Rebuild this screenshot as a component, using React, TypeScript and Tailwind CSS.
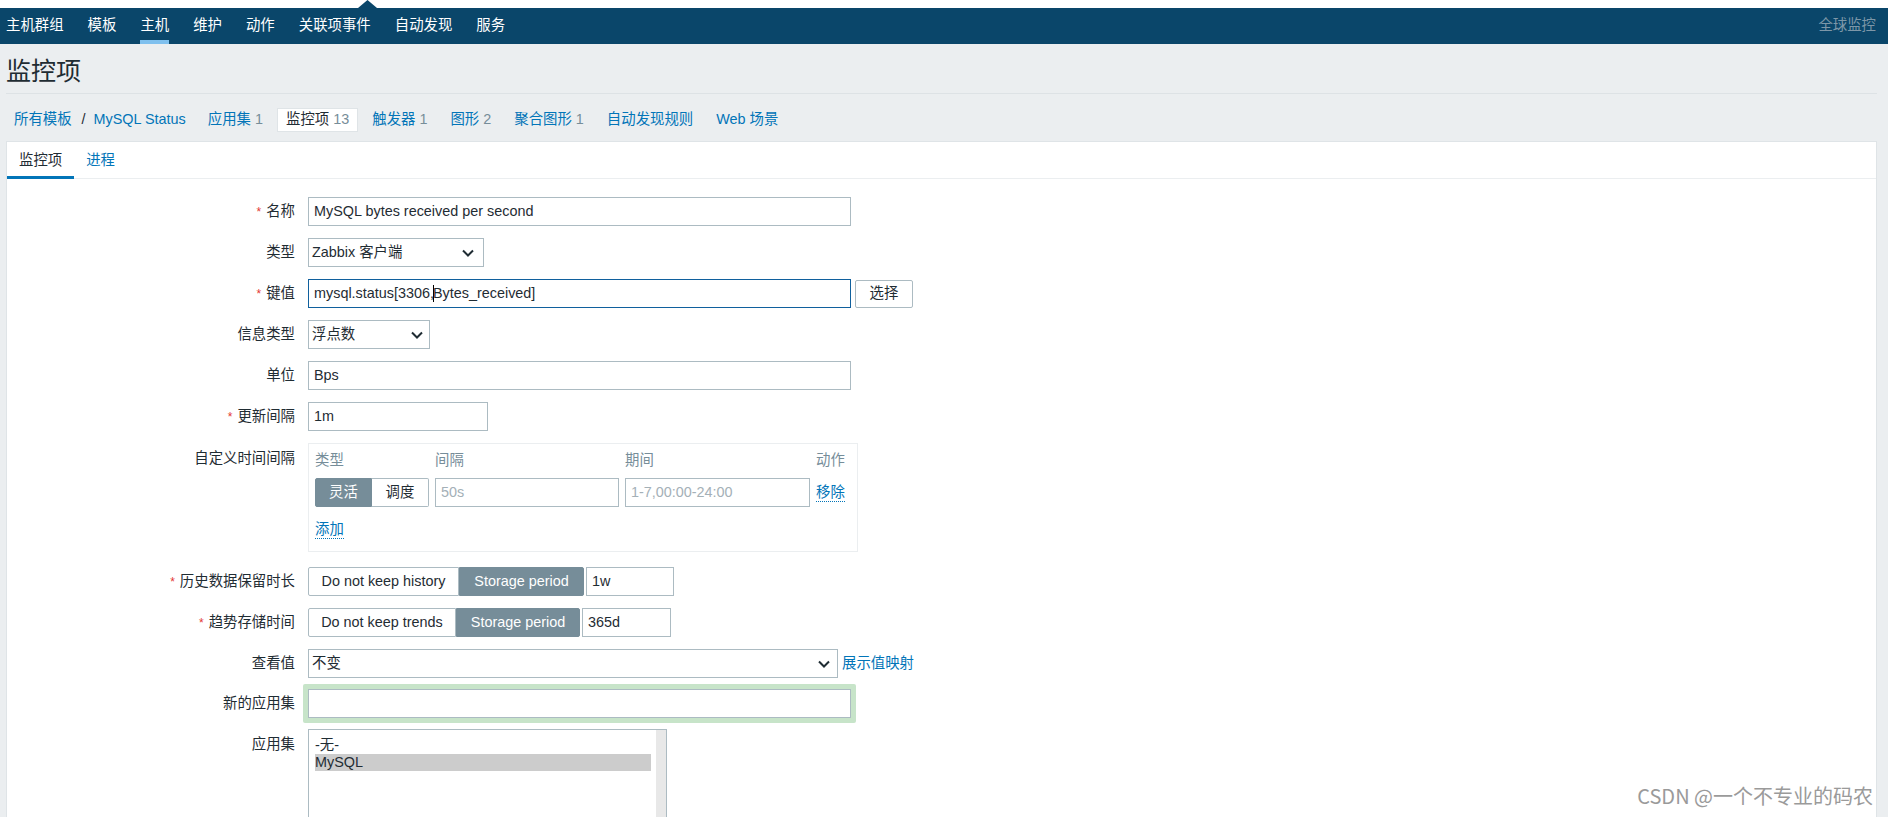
import React from 'react';

const navItems = ['主机群组', '模板', '主机', '维护', '动作', '关联项事件', '自动发现', '服务'];

const Chevron = () => (
  <svg width="12" height="8" viewBox="0 0 12 8" fill="none" className="shrink-0">
    <path d="M1 1.5 6 6.5 11 1.5" stroke="#1f2c33" strokeWidth="2" />
  </svg>
);

const Req = () => <span className="mr-[5px] text-[12px] text-[#e33734]">*</span>;

const Row = ({
  label,
  required,
  top,
  className = 'py-[6px]',
  children,
}: {
  label: string;
  required?: boolean;
  top?: boolean;
  className?: string;
  children: React.ReactNode;
}) => (
  <div className={`flex ${top ? 'items-start' : 'items-center'} ${className}`}>
    <div className={`w-[288px] shrink-0 text-right ${top ? 'pt-[5px]' : ''}`}>
      {required && <Req />}
      {label}
    </div>
    <div className="ml-[13px] flex items-center">{children}</div>
  </div>
);

const Crumb = ({ text, num, active }: { text: string; num?: string; active?: boolean }) => (
  <span
    className={`flex h-[24px] items-center border px-[8px] ${
      active ? 'border-[#dfe4e7] bg-white text-[#1f2c33]' : 'border-transparent text-[#0275b8]'
    }`}
  >
    {text}
    {num && <span className="ml-[4px] text-[#768d99]">{num}</span>}
  </span>
);

export default function App() {
  return (
    <div className="relative h-[817px] overflow-hidden bg-[#ebeef0] text-[14.4px] text-[#1f2c33] font-['Liberation_Sans','Noto_Sans_CJK_SC',sans-serif]">
      {/* top strip */}
      <div className="relative h-[8px] bg-white">
        <svg className="absolute left-[358px] top-0" width="19" height="8" viewBox="0 0 19 8">
          <path d="M9.5 0 19 8H0Z" fill="#0a466a" />
        </svg>
      </div>

      {/* main nav */}
      <nav className="flex h-[36px] items-stretch justify-between bg-[#0a466a] pl-[6px] pr-[12px]">
        <div className="flex gap-[24px]">
          {navItems.map((n) => (
            <a
              key={n}
              className={`flex items-center border-b-4 pt-[4px] text-white ${
                n === '主机' ? 'border-[#7fc0ee]' : 'border-transparent'
              }`}
            >
              {n}
            </a>
          ))}
        </div>
        <div className="flex items-center text-[#7d97a8]">全球监控</div>
      </nav>

      <main className="pl-[6px] pr-[11px]">
        <div className="border-b border-[#dde2e5] pb-[7px] pt-[12px]">
          <h1 className="text-[25px] leading-[30px] text-[#1f2c33]">监控项</h1>
        </div>

        {/* breadcrumbs */}
        <div className="mt-[14px] flex h-[24px] items-center gap-[5px]">
          <div className="flex items-center">
            <span className="pl-[8px] text-[#0275b8]">所有模板</span>
            <span className="ml-[10px] mr-[8px] text-[#1f2c33]">/</span>
            <span className="pr-[8px] text-[#0275b8]">MySQL Status</span>
          </div>
          <Crumb text="应用集" num="1" />
          <Crumb text="监控项" num="13" active />
          <Crumb text="触发器" num="1" />
          <Crumb text="图形" num="2" />
          <Crumb text="聚合图形" num="1" />
          <Crumb text="自动发现规则" />
          <Crumb text="Web 场景" />
        </div>

        {/* card */}
        <div className="mt-[9px] border border-[#dfe4e7] bg-white pb-[40px]">
          <div className="flex border-b border-[#ebeef0]">
            <div className="-mb-px flex h-[37px] items-center border-b-[3px] border-[#0275b8] px-[12px] pt-[3px] text-[#1f2c33]">
              监控项
            </div>
            <div className="-mb-px flex h-[37px] items-center border-b-[3px] border-transparent px-[12px] pt-[3px] text-[#0275b8]">
              进程
            </div>
          </div>

          <div className="pt-[12px]">
            <Row label="名称" required>
              <div className="flex h-[29px] w-[543px] items-center border border-[#acbbc2] px-[5px]">
                MySQL bytes received per second
              </div>
            </Row>

            <Row label="类型">
              <div className="flex h-[29px] w-[176px] items-center justify-between border border-[#acbbc2] pl-[3px] pr-[9px]">
                <span>Zabbix 客户端</span>
                <Chevron />
              </div>
            </Row>

            <Row label="键值" required>
              <div className="flex h-[29px] w-[543px] items-center border border-[#10609d] px-[5px]">
                <span>mysql.status[3306,</span>
                <span className="ml-[-1px] mr-[-1px] h-[17px] w-px bg-black" />
                <span>Bytes_received]</span>
              </div>
              <button className="ml-[4px] flex h-[28px] w-[58px] items-center justify-center rounded-[2px] border border-[#acbbc2] bg-white text-[#1f2c33]">
                选择
              </button>
            </Row>

            <Row label="信息类型">
              <div className="flex h-[29px] w-[122px] items-center justify-between border border-[#acbbc2] pl-[3px] pr-[6px]">
                <span>浮点数</span>
                <Chevron />
              </div>
            </Row>

            <Row label="单位">
              <div className="flex h-[29px] w-[543px] items-center border border-[#acbbc2] px-[5px]">Bps</div>
            </Row>

            <Row label="更新间隔" required>
              <div className="flex h-[29px] w-[180px] items-center border border-[#acbbc2] px-[5px]">1m</div>
            </Row>

            <Row label="自定义时间间隔" top className="pb-[9px] pt-[6px]">
              <div className="w-[550px] border border-[#ebeef0] px-[6px] pb-[12px] pt-[5px]">
                <div className="grid grid-cols-[114px_184px_185px_1fr] gap-x-[6px]">
                  <div className="flex h-[24px] items-center text-[#768d99]">类型</div>
                  <div className="flex h-[24px] items-center text-[#768d99]">间隔</div>
                  <div className="flex h-[24px] items-center text-[#768d99]">期间</div>
                  <div className="flex h-[24px] items-center text-[#768d99]">动作</div>

                  <div className="mt-[5px] flex h-[29px]">
                    <span className="flex w-[57px] items-center justify-center rounded-l-[2px] border border-[#768d99] bg-[#768d99] text-white">
                      灵活
                    </span>
                    <span className="flex w-[57px] items-center justify-center rounded-r-[2px] border border-l-0 border-[#acbbc2] bg-white">
                      调度
                    </span>
                  </div>
                  <div className="mt-[5px] flex h-[29px] items-center border border-[#acbbc2] px-[5px] text-[#a4b0b7]">
                    50s
                  </div>
                  <div className="mt-[5px] flex h-[29px] items-center border border-[#acbbc2] px-[5px] text-[#a4b0b7]">
                    1-7,00:00-24:00
                  </div>
                  <div className="mt-[5px] flex h-[29px] items-center">
                    <span className="border-b border-dotted border-[#0275b8] leading-[18px] text-[#0275b8]">移除</span>
                  </div>
                </div>
                <div className="mt-[12px] flex h-[20px] items-center">
                  <span className="border-b border-dotted border-[#0275b8] leading-[18px] text-[#0275b8]">添加</span>
                </div>
              </div>
            </Row>

            <Row label="历史数据保留时长" required>
              <div className="flex h-[29px]">
                <span className="flex w-[151px] items-center justify-center rounded-l-[2px] border border-[#acbbc2] bg-white">
                  Do not keep history
                </span>
                <span className="flex w-[125px] items-center justify-center rounded-r-[2px] border border-[#768d99] bg-[#768d99] text-white">
                  Storage period
                </span>
              </div>
              <div className="ml-[2px] flex h-[29px] w-[88px] items-center border border-[#acbbc2] px-[5px]">1w</div>
            </Row>

            <Row label="趋势存储时间" required>
              <div className="flex h-[29px]">
                <span className="flex w-[148px] items-center justify-center rounded-l-[2px] border border-[#acbbc2] bg-white">
                  Do not keep trends
                </span>
                <span className="flex w-[124px] items-center justify-center rounded-r-[2px] border border-[#768d99] bg-[#768d99] text-white">
                  Storage period
                </span>
              </div>
              <div className="ml-[2px] flex h-[29px] w-[89px] items-center border border-[#acbbc2] px-[5px]">365d</div>
            </Row>

            <Row label="查看值">
              <div className="flex h-[29px] w-[530px] items-center justify-between border border-[#acbbc2] pl-[3px] pr-[7px]">
                <span>不变</span>
                <Chevron />
              </div>
              <span className="ml-[4px] text-[#0275b8]">展示值映射</span>
            </Row>

            <Row label="新的应用集" className="py-0">
              <div className="-ml-[5px] rounded-[2px] bg-[#c7e4c9] p-[5px]">
                <div className="h-[29px] w-[543px] border border-[#acbbc2] bg-white" />
              </div>
            </Row>

            <Row label="应用集" top className="pt-[6px]">
              <div className="relative h-[130px] w-[359px] border border-[#acbbc2] bg-white pl-[6px] pr-[15px] pt-[7px]">
                <div className="leading-[17px]">-无-</div>
                <div className="bg-[#cccccc] leading-[17px]">MySQL</div>
                <div className="absolute bottom-0 right-0 top-0 w-[10px] bg-[#e8e8e8]" />
              </div>
            </Row>
          </div>
        </div>
      </main>

      {/* watermark */}
      <div className="absolute bottom-[6px] right-[15px] text-[20px] text-[#9a9a9a] font-['Noto_Sans_CJK_SC',sans-serif]">
        CSDN @一个不专业的码农
      </div>
    </div>
  );
}
